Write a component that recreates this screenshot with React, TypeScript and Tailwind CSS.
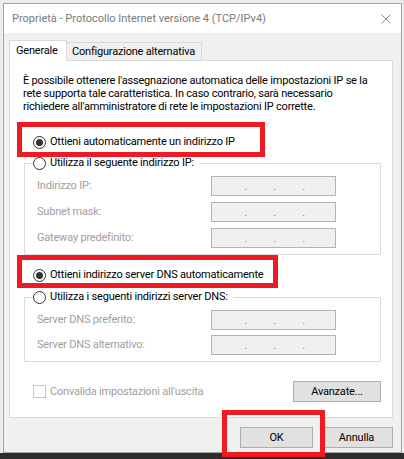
import React from "react";

const Radio = ({ checked, label }: { checked?: boolean; label: string }) => (
  <div className="flex h-[16px] items-center gap-[4px] whitespace-nowrap">
    <span className="flex h-[13px] w-[13px] shrink-0 items-center justify-center rounded-full border border-[#333333] bg-white">
      {checked && <span className="h-[7px] w-[7px] rounded-full bg-[#333333]" />}
    </span>
    <span>{label}</span>
  </div>
);

const IpBox = () => (
  <div className="flex h-[20px] w-[125px] items-center border border-[#b4b4b4] bg-[#f0f0f0] pl-[19px] text-[#8a8a8a]">
    {[0, 1, 2].map((i) => (
      <span key={i} className="w-[29px] pt-[2px] text-center">
        .
      </span>
    ))}
  </div>
);

const Field = ({ label }: { label: string }) => (
  <div className="flex h-[20px] items-center">
    <span className="w-[174px] text-[#a0a0a0]">{label}</span>
    <IpBox />
  </div>
);

const Group = ({ legend, fields, gap }: { legend: string; fields: string[]; gap: string }) => (
  <fieldset className="ml-[14px] w-[357px] border border-[#dcdcdc] px-0 pb-[6px]">
    <legend className="ml-[8px] pr-[5px]">
      <Radio label={legend} />
    </legend>
    <div className={`flex flex-col pl-[12px] pt-[5px] ${gap}`}>
      {fields.map((f) => (
        <Field key={f} label={f} />
      ))}
    </div>
  </fieldset>
);

const Button = ({ label, width }: { label: string; width: string }) => (
  <div
    className={`flex h-[21px] items-center justify-center border border-[#adadad] bg-[#e1e1e1] ${width}`}
  >
    {label}
  </div>
);

export default function App() {
  return (
    <div className="relative flex h-[459px] w-[404px] flex-col overflow-hidden bg-[#ececec] font-['Roboto',sans-serif] text-[11px] leading-[16px] tracking-[-0.2px] text-black">
      <div className="flex-1 pl-[3px] pt-[3px]">
        <div className="flex h-[450px] w-[399px] flex-col border border-[#a3a3a3] bg-[#f0f0f0]">
          {/* title bar */}
          <div className="flex h-[29px] items-center justify-between bg-white pl-[8px] pr-[10px]">
            <span className="whitespace-nowrap text-[11px] tracking-normal text-[#7a7a7a]">
              Proprietà - Protocollo Internet versione 4 (TCP/IPv4)
            </span>
            <svg width="10" height="10" viewBox="0 0 10 10">
              <path d="M0.5 0.5L9.5 9.5M9.5 0.5L0.5 9.5" stroke="#8a8a8a" strokeWidth="1" />
            </svg>
          </div>

          <div className="flex flex-1 flex-col pl-[5px] pt-[7px]">
            {/* tabs */}
            <div className="flex h-[20px] items-end whitespace-nowrap">
              <div className="relative z-10 -mb-px flex h-[21px] w-[58px] items-center border border-b-0 border-[#d9d9d9] bg-white pl-[6px]">
                Generale
              </div>
              <div className="flex h-[18px] w-[135px] items-center border-r border-t border-[#d9d9d9] bg-[#f0f0f0] pl-[5px] pt-[1px]">
                Configurazione alternativa
              </div>
            </div>

            {/* panel */}
            <div className="flex h-[358px] w-[384px] flex-col border border-[#d9d9d9] bg-white">
              <p className="ml-[13px] mt-[13px] whitespace-nowrap leading-[13px]">
                È possibile ottenere l'assegnazione automatica delle impostazioni IP se la
                <br />
                rete supporta tale caratteristica. In caso contrario, sarà necessario
                <br />
                richiedere all'amministratore di rete le impostazioni IP corrette.
              </p>

              <div className="ml-[23px] mt-[21px]">
                <Radio checked label="Ottieni automaticamente un indirizzo IP" />
              </div>
              <div className="mt-[5px]">
                <Group
                  legend="Utilizza il seguente indirizzo IP:"
                  fields={["Indirizzo IP:", "Subnet mask:", "Gateway predefinito:"]}
                  gap="gap-[6px]"
                />
              </div>

              <div className="ml-[23px] mt-[12px]">
                <Radio checked label="Ottieni indirizzo server DNS automaticamente" />
              </div>
              <div className="mt-[6px]">
                <Group
                  legend="Utilizza i seguenti indirizzi server DNS:"
                  fields={["Server DNS preferito:", "Server DNS alternativo:"]}
                  gap="gap-[5px]"
                />
              </div>

              <div className="ml-[14px] mt-[19px] flex w-[357px] items-center justify-between">
                <div className="flex items-center gap-[4px] pl-[9px] text-[#a0a0a0]">
                  <span className="h-[13px] w-[13px] border border-[#c6c6c6] bg-white" />
                  Convalida impostazioni all'uscita
                </div>
                <Button label="Avanzate..." width="w-[88px]" />
              </div>
            </div>

            {/* dialog buttons */}
            <div className="mt-[9px] flex justify-end gap-[7px] pr-[8px]">
              <Button label="OK" width="w-[73px]" />
              <Button label="Annulla" width="w-[73px]" />
            </div>
          </div>
        </div>
      </div>
      <div className="h-[6px] bg-[#2d2d2d]" />

      {/* red annotation boxes */}
      <div className="absolute left-[17px] top-[122px] h-[35px] w-[248px] border-[5px] border-[#ed1c24]" />
      <div className="absolute left-[17px] top-[255px] h-[33px] w-[261px] border-[5px] border-[#ed1c24]" />
      <div className="absolute left-[222px] top-[410px] h-[47px] w-[103px] border-[5px] border-[#ed1c24]" />
    </div>
  );
}
